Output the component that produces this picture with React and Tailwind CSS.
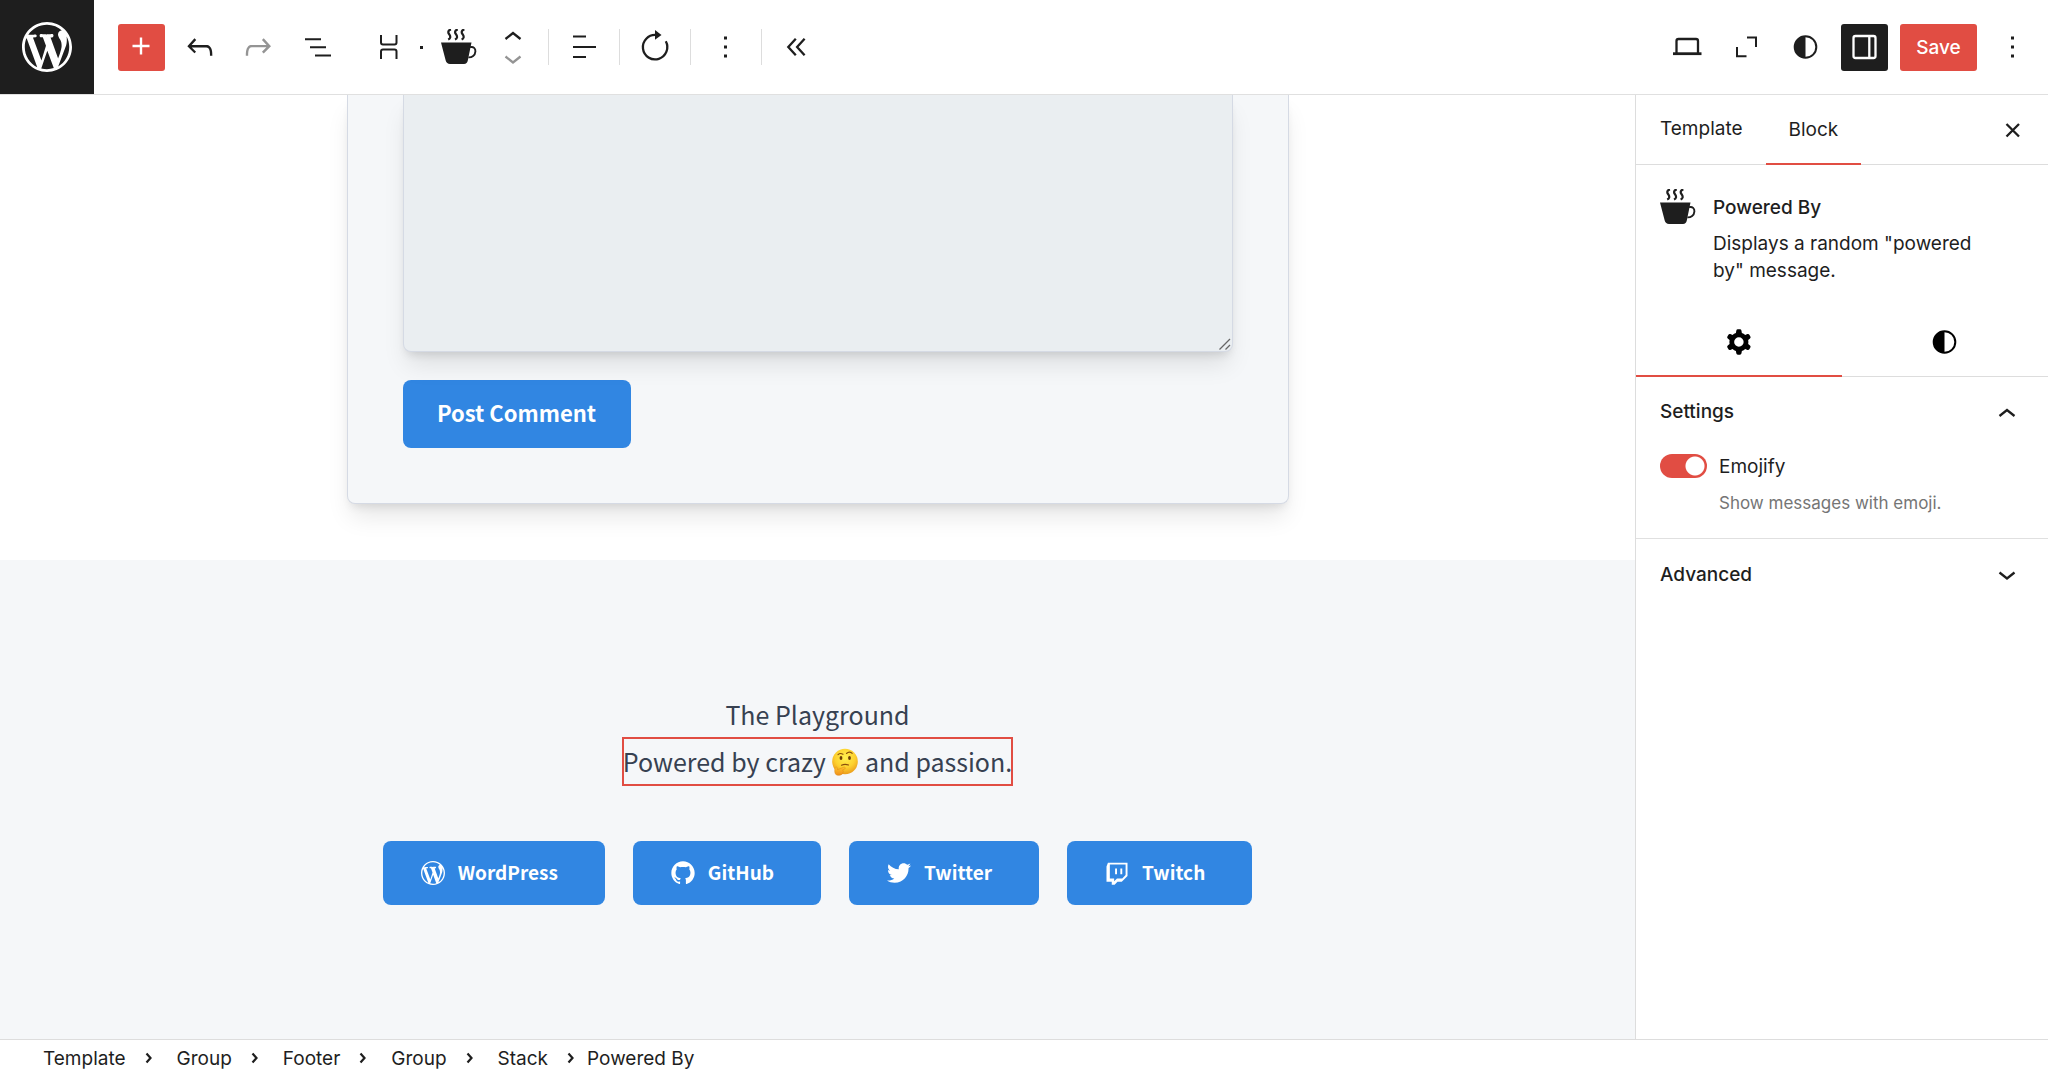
import React, { useState } from "react";
import { FaTwitter } from "react-icons/fa";

const UI = "font-['Inter','Liberation_Sans',sans-serif]";
const SITE = "font-['Noto_Sans_CJK_SC','Noto_Sans',sans-serif]";

/* ---------- icons ---------- */

function Icon({ children, className = "size-[38px]", viewBox = "0 0 38 38" }) {
  return (
    <svg viewBox={viewBox} className={`shrink-0 ${className}`} fill="none" stroke="currentColor" strokeWidth="2.3" aria-hidden="true">
      {children}
    </svg>
  );
}

const WordPressLogo = ({ className = "size-[50px]" }) => (
  <svg viewBox="0 0 20 20" className={className} fill="currentColor" aria-hidden="true">
    <path d="M20 10c0-5.51-4.49-10-10-10C4.48 0 0 4.49 0 10c0 5.52 4.48 10 10 10 5.51 0 10-4.48 10-10zM7.78 15.37L4.37 6.22c.55-.02 1.17-.08 1.17-.08.5-.06.44-1.13-.06-1.11 0 0-1.45.11-2.37.11-.18 0-.37 0-.58-.01C4.12 2.69 6.87 1.11 10 1.11c2.33 0 4.45.87 6.05 2.34-.68-.11-1.65.39-1.65 1.58 0 .74.45 1.36.9 2.1.35.61.55 1.36.55 2.46 0 1.49-1.4 5-1.4 5l-3.03-8.37c.54-.02.82-.17.82-.17.5-.05.44-1.25-.06-1.22 0 0-1.44.12-2.38.12-.87 0-2.33-.12-2.33-.12-.5-.03-.56 1.2-.06 1.22l.92.08 1.26 3.41zM17.41 10c.24-.64.74-1.87.43-4.25.7 1.29 1.05 2.71 1.05 4.25 0 3.29-1.73 6.24-4.4 7.78.97-2.59 1.94-5.2 2.92-7.78zM6.1 18.09C3.12 16.65 1.11 13.53 1.11 10c0-1.3.23-2.48.72-3.59C3.25 10.3 4.67 14.2 6.1 18.09zm4.03-6.63l2.58 6.98c-.86.29-1.76.45-2.71.45-.79 0-1.57-.11-2.29-.33.81-2.38 1.62-4.74 2.42-7.1z" />
  </svg>
);

const PlusIcon = () => (
  <Icon><path d="M18 9.500v17M9.500 18h17" strokeWidth="2.4" /></Icon>
);

const UndoIcon = () => (
  <Icon viewBox="0 0 24 24">
    <path stroke="none" fill="currentColor" d="M18.3 11.7c-.6-.6-1.4-.9-2.3-.9H6.7l2.9-3.3-1.1-1-4.5 5L8.5 16l1-1-2.7-2.7H16c.5 0 .9.2 1.3.5 1 1 1 3.4 1 4.5v.3h1.5v-.2c0-1.5 0-4.3-1.5-5.7z" />
  </Icon>
);

const RedoIcon = () => (
  <Icon viewBox="0 0 24 24">
    <path stroke="none" fill="currentColor" d="M15.6 6.5l-1.1 1 2.9 3.3H8c-.9 0-1.7.3-2.3.9-1.4 1.5-1.4 4.2-1.4 5.6v.2h1.5v-.3c0-1.1 0-3.5 1-4.5.3-.3.7-.5 1.3-.5h9.2L14.5 15l1.1 1.1 4.6-4.6-4.6-5z" />
  </Icon>
);

const ListViewIcon = () => (
  <Icon><path d="M8 11.300h16M13 19.300h16M18 27.500h16" strokeWidth="2" /></Icon>
);

const StackIcon = () => (
  <Icon>
    <path d="M11 7v7.500a2 2 0 0 0 2 2h11.500a2 2 0 0 0 2-2V7M11 31v-7.500a2 2 0 0 1 2-2h11.500a2 2 0 0 1 2 2V31" strokeWidth="2" />
  </Icon>
);

const CupIcon = () => (
  <Icon className="h-9 w-9" viewBox="0 0 36 36">
    <path d="M0 13.500h30.500l-3.700 18c-.5 2.300-1.600 3.500-3.800 3.500H9c-2.200 0-3.700-1.200-4.300-3.500z" fill="currentColor" stroke="none" />
    <path d="M29 18.200c3.500-1 5.700 1.300 5.400 4.500-.3 3.600-3.400 5.900-7 5.700" strokeWidth="1.900" />
    <path
      d="M10 .4C7.500 1 6.400 3 8.200 5.300 9.900 7.500 9.600 9.500 7.200 10.600M16.800.4C14.300 1 13.200 3 15 5.300c1.700 2.200 1.400 4.200-1 5.300M23.400.4C20.900 1 19.800 3 21.600 5.300c1.700 2.200 1.400 4.200-1 5.300"
      strokeWidth="2.200"
    />
  </Icon>
);

const ChevronIcon = ({ up = false, className = "size-[22px]" }) => (
  <Icon className={className} viewBox="0 0 22 22">
    <path d={up ? "M3.500 14 11 8l7.500 6" : "M3.500 8.500 11 14.500 18.500 8.500"} />
  </Icon>
);

const AlignIcon = () => (
  <Icon><path d="M8 8.500h13M8 19h23M8 29h13" strokeWidth="2.200" /></Icon>
);

const RotateIcon = () => (
  <Icon>
    <path d="M29.800 13.300A12.200 12.200 0 1 1 20 7" strokeWidth="2.300" />
    <path d="M19 2 25.500 7 19 11.800z" fill="currentColor" stroke="none" />
  </Icon>
);

const MoreIcon = () => (
  <Icon><path d="M18.500 8.600v3M18.500 17.500v3M18.500 26.400v3" strokeWidth="3" /></Icon>
);

const CollapseIcon = () => (
  <Icon><path d="M17.800 10.700 10.300 19l7.500 8.300M26.600 10.700 19.100 19l7.500 8.300" /></Icon>
);

const LaptopIcon = () => (
  <Icon>
    <path d="M7.500 25V13a2 2 0 0 1 2-2h17.500a2 2 0 0 1 2 2v12" />
    <path d="M4 25.700h28.500" strokeWidth="2.800" />
  </Icon>
);

const ExpandIcon = () => (
  <Icon><path d="M19 9.500h9v9.500M9 19v9.300h9.500" strokeWidth="2" /></Icon>
);

const ContrastIcon = () => (
  <Icon>
    <circle cx="18.500" cy="19" r="10.800" strokeWidth="2" />
    <path d="M18.500 8a11 11 0 0 0 0 22z" fill="currentColor" stroke="none" />
  </Icon>
);

const SidebarIcon = () => (
  <Icon>
    <rect x="7.500" y="8" width="22" height="22" rx="2" />
    <path d="M23.300 8v22" />
  </Icon>
);

const CloseIcon = () => (
  <Icon><path d="m12.500 13 12.500 12.500M25 13l-12.500 12.500" /></Icon>
);

const GearIcon = () => (
  <Icon viewBox="0 0 24 24">
    <path
      stroke="none"
      fill="currentColor"
      fillRule="evenodd"
      d="M10.289 4.836A1 1 0 0111.275 4h1.306a1 1 0 01.987.836l.244 1.466c.787.26 1.503.679 2.108 1.218l1.393-.522a1 1 0 011.216.437l.653 1.13a1 1 0 01-.23 1.273l-1.148.944a6.025 6.025 0 010 2.435l1.149.946a1 1 0 01.23 1.272l-.653 1.13a1 1 0 01-1.216.437l-1.394-.522c-.605.54-1.32.958-2.108 1.218l-.244 1.466a1 1 0 01-.987.836h-1.306a1 1 0 01-.986-.836l-.244-1.466a5.995 5.995 0 01-2.108-1.218l-1.394.522a1 1 0 01-1.217-.436l-.653-1.131a1 1 0 01.23-1.272l1.149-.946a6.026 6.026 0 010-2.435l-1.148-.944a1 1 0 01-.23-1.272l.653-1.131a1 1 0 011.217-.437l1.393.522a5.994 5.994 0 012.108-1.218l.244-1.466zM14.929 12a3 3 0 11-6 0 3 3 0 016 0z"
    />
  </Icon>
);

const GitHubIcon = () => (
  <svg viewBox="0 0 24 24" className="size-7" fill="currentColor" aria-hidden="true">
    <path d="M12,2C6.477,2,2,6.477,2,12c0,4.419,2.865,8.166,6.839,9.489c0.5,0.09,0.682-0.218,0.682-0.484 c0-0.236-0.009-0.866-0.014-1.699c-2.782,0.602-3.369-1.34-3.369-1.34c-0.455-1.157-1.11-1.465-1.11-1.465 c-0.909-0.62,0.069-0.608,0.069-0.608c1.004,0.071,1.532,1.03,1.532,1.03c0.891,1.529,2.341,1.089,2.91,0.833 c0.091-0.647,0.349-1.086,0.635-1.337c-2.22-0.251-4.555-1.111-4.555-4.943c0-1.091,0.39-1.984,1.03-2.682 C6.546,8.54,6.202,7.524,6.746,6.148c0,0,0.84-0.269,2.75,1.025C10.295,6.95,11.15,6.84,12,6.836 c0.85,0.004,1.705,0.114,2.504,0.336c1.909-1.294,2.748-1.025,2.748-1.025c0.546,1.376,0.202,2.394,0.1,2.646 c0.64,0.699,1.026,1.591,1.026,2.682c0,3.841-2.337,4.687-4.565,4.935c0.359,0.307,0.679,0.917,0.679,1.852 c0,1.335-0.012,2.415-0.012,2.741c0,0.269,0.18,0.579,0.688,0.481C19.138,20.161,22,16.416,22,12C22,6.477,17.523,2,12,2z" />
  </svg>
);

const TwitchIcon = () => (
  <svg viewBox="0 0 24 24" className="size-7" fill="currentColor" aria-hidden="true">
    <path d="M16.499,8.089h-1.636v4.91h1.636V8.089z M12,8.089h-1.637v4.91H12V8.089z M4.228,3.178L3,6.451v13.092h4.499V22h2.456l2.454-2.456h3.681L21,14.636V3.178H4.228z M19.364,13.816l-2.864,2.865H12l-2.453,2.453V16.68H5.863V4.814h13.501V13.816z" />
  </svg>
);

const ThinkingFace = () => (
  <svg viewBox="0 0 28 28" className="inline-block size-7 align-[-4px]" role="img" aria-label="thinking face">
    <defs>
      <radialGradient id="face" cx="50%" cy="35%" r="65%">
        <stop offset="0" stopColor="#fff04f" />
        <stop offset=".6" stopColor="#fdd12f" />
        <stop offset="1" stopColor="#eb9c1c" />
      </radialGradient>
      <linearGradient id="hand" x1="0" y1="0" x2="0" y2="1">
        <stop offset="0" stopColor="#ffc52e" />
        <stop offset="1" stopColor="#ef8f1b" />
      </linearGradient>
    </defs>
    <circle cx="14" cy="13.500" r="12.800" fill="url(#face)" />
    <ellipse cx="10" cy="10" rx="1.400" ry="2.100" fill="#6b3d07" />
    <ellipse cx="18.500" cy="10" rx="1.400" ry="2.100" fill="#6b3d07" />
    <path d="M7 6.700c1.300-1.200 3.600-1.300 5-.4M15.500 5.500c1.800-1.900 4.400-1.700 5.700-.1" stroke="#8a500b" strokeWidth="1.100" fill="none" strokeLinecap="round" />
    <path d="M10.500 17.200c2.300-1 4.700-1 7-.2" stroke="#8a500b" strokeWidth="1.200" fill="none" strokeLinecap="round" />
    <path d="M4.200 19.500c.5-1 1.700-.8 1.900.3l.4 1.900 6.200-2.500c1.400-.5 2.300 1 1.100 1.700l-2.200 1.300c.9.300.9 1.300.3 1.900.3.900-.1 1.700-.9 2.100-1.700 1.500-5 1.600-6.400 0-1.200-1.500-1-4.700-.4-6.700z" fill="url(#hand)" stroke="#dd8613" strokeWidth=".5" />
  </svg>
);

/* ---------- pieces ---------- */

function ToolButton({ label, className = "", children, ...rest }) {
  return (
    <button type="button" aria-label={label} className={`flex h-[47px] shrink-0 items-center justify-center ${className}`} {...rest}>
      {children}
    </button>
  );
}

function ToolSegment({ label, children }) {
  return (
    <div className="flex h-9 w-[71px] items-center justify-center border-l border-[#ddd]">
      <ToolButton label={label} className="w-[47px]">{children}</ToolButton>
    </div>
  );
}

function Header() {
  return (
    <header className="flex h-[95px] shrink-0 items-center border-b border-[#e0e0e0] bg-white pr-3">
      <a href="#" aria-label="View all templates" className="flex size-[94px] items-center justify-center bg-[#1e1e1e] text-white">
        <WordPressLogo />
      </a>
      <div className="ml-6 flex items-center gap-3">
        <ToolButton label="Toggle block inserter" className="w-[47px] rounded-[3px] bg-[#e14d43] text-white"><PlusIcon /></ToolButton>
        <ToolButton label="Undo" className="w-[46px]"><UndoIcon /></ToolButton>
        <ToolButton label="Redo" className="w-[46px] text-[#949494]" disabled><RedoIcon /></ToolButton>
        <ToolButton label="List view" className="w-[46px]"><ListViewIcon /></ToolButton>
      </div>
      <div className="ml-[26px] flex items-center" role="toolbar" aria-label="Block tools">
        <ToolButton label="Select parent block: Stack" className="w-[47px]"><StackIcon /></ToolButton>
        <span className="mx-2 size-[3px] bg-[#1e1e1e]" />
        <ToolButton label="Powered By" className="ml-1 w-[47px]"><CupIcon /></ToolButton>
        <div className="mr-6 ml-5 flex flex-col gap-px">
          <button type="button" aria-label="Move up"><ChevronIcon up /></button>
          <button type="button" aria-label="Move down" disabled className="text-[#949494]"><ChevronIcon /></button>
        </div>
        <ToolSegment label="Align text"><AlignIcon /></ToolSegment>
        <ToolSegment label="Refresh message"><RotateIcon /></ToolSegment>
        <ToolSegment label="Block options"><MoreIcon /></ToolSegment>
        <ToolSegment label="Hide block tools"><CollapseIcon /></ToolSegment>
      </div>
      <div className="ml-auto flex items-center gap-3">
        <ToolButton label="View" className="w-[47px]"><LaptopIcon /></ToolButton>
        <ToolButton label="Zoom out" className="w-[47px]"><ExpandIcon /></ToolButton>
        <ToolButton label="Styles" className="w-[47px]"><ContrastIcon /></ToolButton>
        <ToolButton label="Settings" className="w-[47px] rounded-[3px] bg-[#1e1e1e] text-white" aria-pressed="true"><SidebarIcon /></ToolButton>
        <button type="button" className="h-[47px] w-[77px] rounded-[3px] bg-[#e14d43] pt-0.5 text-[19px] font-medium text-white">Save</button>
        <ToolButton label="Options" className="w-[47px]"><MoreIcon /></ToolButton>
      </div>
    </header>
  );
}

const LINKS = [
  { name: "WordPress", icon: <WordPressLogo className="m-0.5 size-6" /> },
  { name: "GitHub", icon: <GitHubIcon /> },
  { name: "Twitter", icon: <FaTwitter className="m-0.5 size-6" /> },
  { name: "Twitch", icon: <TwitchIcon /> },
];

function Canvas() {
  return (
    <main className={`flex min-w-0 flex-1 flex-col overflow-hidden bg-white text-[#374151] ${SITE}`}>
      <form className="mx-auto mb-14 w-full max-w-[942px] rounded-b-lg border border-t-0 border-[#d5dae4] bg-[#f5f7f9] px-[55px] pb-[55px] shadow-[0_16px_24px_-4px_rgba(0,0,0,0.1),0_6px_10px_-4px_rgba(0,0,0,0.1)]">
        <div className="relative">
          <textarea aria-label="Comment" className="block h-[257px] w-full resize-none rounded-b-lg border border-t-0 border-[#d5dae4] bg-[#eaeef1] shadow-[0_16px_24px_-4px_rgba(0,0,0,0.1),0_6px_10px_-4px_rgba(0,0,0,0.12)]" />
          <svg viewBox="0 0 12 12" className="absolute right-0.5 bottom-0.5 size-3" stroke="#666" strokeWidth="1.300" aria-hidden="true">
            <path d="M.5 11.500 11 1M6.500 11.500 11 7" />
          </svg>
        </div>
        <button type="button" className="mt-7 h-[68px] w-[228px] rounded-lg bg-[#3186e2] pb-1 text-[22px] leading-8 font-bold text-white">Post Comment</button>
      </form>
      <footer className="flex-1 bg-[#f5f7f9] pt-[131px]">
        <div className="flex flex-col items-center text-[25px] leading-[47px]">
          <p>The Playground</p>
          <p className="outline-2 -outline-offset-1 outline-[#e14d43]">Powered by crazy <ThinkingFace /> and passion.</p>
        </div>
        <nav aria-label="Links" className="mt-14 flex justify-center gap-7">
          {LINKS.map(({ name, icon }) => (
            <a key={name} href="#" className="flex h-16 items-center gap-[11px] rounded-lg bg-[#3186e2] pr-[47px] pl-9 text-[19px] leading-7 font-bold text-white">
              {icon}
              <span className="pb-0.5">{name}</span>
            </a>
          ))}
        </nav>
      </footer>
    </main>
  );
}

function Sidebar() {
  const [emojify, setEmojify] = useState(true);
  return (
    <aside className="w-[413px] shrink-0 border-l border-[#ddd] bg-white text-[19px]">
      <div className="flex h-[70px] items-stretch border-b border-[#ddd] pr-4 pl-px">
        <button type="button" className="px-[23px]">Template</button>
        <button type="button" className="-mb-px border-b-2 border-[#e14d43] px-[23px] pt-0.5">Block</button>
        <ToolButton label="Close settings" className="ml-auto self-center"><CloseIcon /></ToolButton>
      </div>
      <div className="flex gap-[17px] pt-6 pr-[70px] pl-6">
        <CupIcon />
        <div>
          <h2 className="pt-[5px] leading-[27px] font-medium">Powered By</h2>
          <p className="mt-[9px] leading-[27px]">Displays a random "powered by" message.</p>
        </div>
      </div>
      <div className="mt-[23px] flex h-[70px] border-b border-[#ddd] text-black">
        <button type="button" aria-label="Settings" className="-mb-px flex flex-1 items-center justify-center border-b-2 border-[#e14d43] pt-0.5"><GearIcon /></button>
        <button type="button" aria-label="Styles" className="flex flex-1 items-center justify-center"><ContrastIcon /></button>
      </div>
      <section className="border-b border-[#e0e0e0]">
        <h3>
          <button type="button" aria-expanded="true" className="flex h-[71px] w-full items-center justify-between pr-[30px] pl-6 font-medium">
            Settings
            <ChevronIcon up />
          </button>
        </h3>
        <div className="flex items-start gap-3 px-6 pt-[6px]">
          <input
            id="emojify"
            type="checkbox"
            role="switch"
            checked={emojify}
            onChange={(e) => setEmojify(e.target.checked)}
            aria-describedby="emojify-help"
            className="h-6 w-[47px] shrink-0 appearance-none rounded-full bg-[#757575] bg-[radial-gradient(circle_at_12px_12px,white_9px,transparent_10px)] checked:bg-[#e14d43] checked:bg-[radial-gradient(circle_at_35px_12px,white_9px,transparent_10px)]"
          />
          <div>
            <label htmlFor="emojify" className="block leading-[26px]">Emojify</label>
            <p id="emojify-help" className="mt-[11px] mb-[23px] text-[17px] leading-6 text-[#757575]">Show messages with emoji.</p>
          </div>
        </div>
      </section>
      <section>
        <h3>
          <button type="button" aria-expanded="false" className="flex h-[72px] w-full items-center justify-between pr-[30px] pl-6 font-medium">
            Advanced
            <ChevronIcon />
          </button>
        </h3>
      </section>
    </aside>
  );
}

const CRUMBS = ["Template", "Group", "Footer", "Group", "Stack"];

function Breadcrumbs() {
  return (
    <nav aria-label="Block breadcrumb" className="h-9 shrink-0 border-t border-[#ddd] bg-white pt-[3px] pl-[43px] text-[19px]">
      <ol className="flex h-full items-center">
        {CRUMBS.map((name, i) => (
          <li key={i} className="flex items-center">
            <button type="button">{name}</button>
            <svg viewBox="0 0 10 14" className="mr-[23px] mb-[3px] ml-[18px] h-3.5 w-2.5" fill="none" stroke="currentColor" strokeWidth="2.200" aria-hidden="true">
              <path d="m2.500 2.500 4 4.500-4 4.500" />
            </svg>
          </li>
        ))}
        <li aria-current="true" className="-ml-3">Powered By</li>
      </ol>
    </nav>
  );
}

export default function App() {
  return (
    <div className={`flex h-screen flex-col overflow-hidden bg-white text-[#1e1e1e] ${UI}`}>
      <Header />
      <div className="flex min-h-0 flex-1">
        <Canvas />
        <Sidebar />
      </div>
      <Breadcrumbs />
    </div>
  );
}
